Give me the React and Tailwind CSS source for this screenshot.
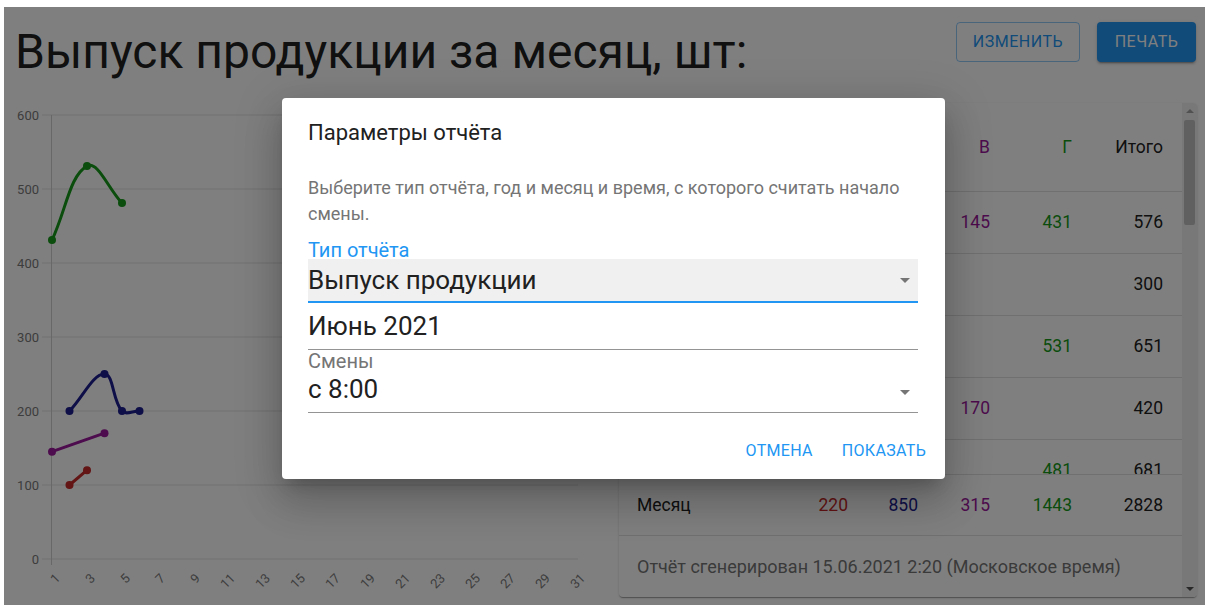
import React from 'react'

// chart geometry: day -> x, units -> y
const xOf = (d) => 52 + (d - 1) * 17.5
const yOf = (v) => 459 - v * 0.74

const days = Array.from({ length: 31 }, (_, i) => i + 1)
const ticks = [0, 100, 200, 300, 400, 500, 600]

const series = [
  { name: 'А', color: '#c62828', points: [[2, 100], [3, 120]] },
  { name: 'Б', color: '#1c1c90', points: [[2, 200], [4, 250], [5, 200], [6, 200]] },
  { name: 'В', color: '#9a189a', points: [[1, 145], [4, 170]] },
  { name: 'Г', color: '#159a18', points: [[1, 431], [3, 531], [5, 481]] },
]

const rows = [
  ['1 июня', '', '', '145', '431', '576'],
  ['2 июня', '100', '200', '', '', '300'],
  ['3 июня', '120', '', '', '531', '651'],
  ['4 июня', '', '250', '170', '', '420'],
  ['5 июня', '', '200', '', '481', '681'],
  ['6 июня', '', '200', '', '', '200'],
]

const colColors = ['text-[#c62828]', 'text-[#1c1c90]', 'text-[#9a189a]', 'text-[#159a18]', 'text-[#212121]']
const cols = 'grid grid-cols-[175px_70px_70px_72px_82px_1fr] items-center'

// chart.js-like spline path
function splinePath(pts, t = 0.4) {
  const p = pts.map(([d, v]) => [xOf(d), yOf(v)])
  if (p.length < 3) return 'M' + p.map((q) => q.join(' ')).join(' L')
  const cps = p.map((cur, i) => {
    const prev = p[i - 1] || cur
    const next = p[i + 1] || cur
    const d01 = Math.hypot(cur[0] - prev[0], cur[1] - prev[1])
    const d12 = Math.hypot(next[0] - cur[0], next[1] - cur[1])
    const s01 = d01 / (d01 + d12 || 1)
    const s12 = d12 / (d01 + d12 || 1)
    return {
      prev: [cur[0] - t * s01 * (next[0] - prev[0]), cur[1] - t * s01 * (next[1] - prev[1])],
      next: [cur[0] + t * s12 * (next[0] - prev[0]), cur[1] + t * s12 * (next[1] - prev[1])],
    }
  })
  let d = `M${p[0][0]} ${p[0][1]}`
  for (let i = 1; i < p.length; i++) {
    const a = cps[i - 1].next
    const b = cps[i].prev
    d += ` C${a[0]} ${a[1]} ${b[0]} ${b[1]} ${p[i][0]} ${p[i][1]}`
  }
  return d
}

const Chart = () => (
  <svg width="619" height="505" className="block">
    {ticks.map((v) => (
      <g key={v}>
        <line x1="42" x2="578" y1={yOf(v)} y2={yOf(v)} stroke="#e2e2e2" strokeWidth="1" />
        <text x="39" y={yOf(v) + 4.5} textAnchor="end" fontSize="13" fill="#7a7a7a">{v}</text>
      </g>
    ))}
    <line x1="51.5" x2="51.5" y1={yOf(600)} y2={yOf(0) + 6} stroke="#d0d0d0" />
    {days.filter((d) => d % 2 === 1).map((d) => (
      <text
        key={d}
        x={xOf(d) + 9}
        y="479"
        textAnchor="end"
        fontSize="13"
        fill="#7a7a7a"
        transform={`rotate(-45 ${xOf(d) + 9} 479)`}
      >
        {d}
      </text>
    ))}
    {series.map((s) => (
      <g key={s.name}>
        <path d={splinePath(s.points)} fill="none" stroke={s.color} strokeWidth="3" />
        {s.points.map(([d, v]) => (
          <circle key={d} cx={xOf(d)} cy={yOf(v)} r="4" fill={s.color} />
        ))}
      </g>
    ))}
  </svg>
)

const Row = ({ cells, className = '' }) => (
  <div className={`${cols} h-[62px] shrink-0 border-b border-[#e0e0e0] ${className}`}>
    <div className="pl-[18px] text-[#212121]">{cells[0]}</div>
    {cells.slice(1).map((c, i) => (
      <div key={i} className={`text-right ${i === 4 ? 'pr-[19px]' : 'pr-[16px]'} ${colColors[i]}`}>{c}</div>
    ))}
  </div>
)

const ReportTable = () => (
  <div className="w-[578px] h-[494px] mt-[3px] bg-white rounded-[4px] shadow-[0_2px_1px_-1px_rgba(0,0,0,0.2),0_1px_1px_0_rgba(0,0,0,0.14),0_1px_3px_0_rgba(0,0,0,0.12)] flex overflow-hidden text-[17.5px]">
    <div className="flex-1 flex flex-col">
      <div className={`${cols} h-[89px] shrink-0 border-b border-[#e0e0e0]`}>
        <div className="pl-[18px] text-[#212121]">День</div>
        {['А', 'Б', 'В', 'Г', 'Итого'].map((h, i) => (
          <div key={h} className={`text-right ${i === 4 ? 'pr-[19px]' : 'pr-[16px]'} ${colColors[i]}`}>{h}</div>
        ))}
      </div>
      <div className="h-[282px] overflow-hidden flex flex-col">
        {rows.map((r) => (
          <Row key={r[0]} cells={r} />
        ))}
      </div>
      <Row cells={['Месяц', '220', '850', '315', '1443', '2828']} className="border-t" />
      <div className="flex-1 flex items-center pl-[18px] text-[18px] text-[#757575]">
        Отчёт сгенерирован 15.06.2021 2:20 (Московское время)
      </div>
    </div>
    {/* scrollbar */}
    <div className="w-[15px] bg-[#f1f1f1] flex flex-col items-center">
      <div className="h-[15px] flex items-center justify-center">
        <div className="w-0 h-0 border-x-[4px] border-x-transparent border-b-[4px] border-b-[#a3a3a3]" />
      </div>
      <div className="w-[11px] h-[105px] mt-[2px] bg-[#c1c1c1] rounded-[2px]" />
      <div className="flex-1" />
      <div className="h-[17px] flex items-center justify-center">
        <div className="w-0 h-0 border-x-[4px] border-x-transparent border-t-[4px] border-t-[#505050]" />
      </div>
    </div>
  </div>
)

const Caret = () => (
  <div className="w-0 h-0 border-x-[5px] border-x-transparent border-t-[5px] border-t-[#757575]" />
)

const ReportDialog = () => (
  <div className="absolute left-[282px] top-[98px] w-[663px] h-[381px] bg-white rounded-[4px] shadow-[0_11px_15px_-7px_rgba(0,0,0,0.2),0_24px_38px_3px_rgba(0,0,0,0.14),0_9px_46px_8px_rgba(0,0,0,0.12)] flex flex-col">
    <div className="px-[26px] pt-[19px]">
      <h2 className="text-[22px] leading-[32px] text-[#212121]">Параметры отчёта</h2>
      <p className="mt-[26px] text-[18px] leading-[26px] text-[#757575]">
        Выберите тип отчёта, год и месяц и время, с которого считать начало смены.
      </p>
      <div className="mt-[15px] mr-[1px]">
        <div className="text-[20px] leading-[17px] text-[#2196f3]">Тип отчёта</div>
        <div className="h-[44px] bg-[#f0f0f0] border-b-2 border-[#2196f3] flex items-center justify-between pr-[8px]">
          <span className="text-[26px] text-[#212121]">Выпуск продукции</span>
          <Caret />
        </div>
        <div className="h-[47px] border-b border-[#949494] flex items-center">
          <span className="text-[26px] text-[#212121]">Июнь 2021</span>
        </div>
        <div className="mt-[2px] text-[20px] leading-[18px] text-[#757575]">Смены</div>
        <div className="h-[43px] pb-[4px] border-b border-[#949494] flex items-center justify-between pr-[8px]">
          <span className="text-[26px] text-[#212121]">с 8:00</span>
          <div className="mt-[6px]"><Caret /></div>
        </div>
      </div>
    </div>
    <div className="flex justify-end gap-[13px] pr-[11px] pt-[20px]">
      <button className="h-[36px] px-[8px] text-[16px] tracking-[0.3px] text-[#2196f3] uppercase">Отмена</button>
      <button className="h-[36px] px-[8px] text-[16px] tracking-[0.3px] text-[#2196f3] uppercase">Показать</button>
    </div>
  </div>
)

export default function App() {
  return (
    <div className="relative w-[1205px] h-[605px] overflow-hidden bg-white font-['Roboto',sans-serif]">
      <div className="flex items-start justify-between h-[100px] pl-[15px] pr-[9px] pt-[22px]">
        <h1 className="mt-[2px] text-[48px] leading-[56px] text-[#212121]">Выпуск продукции за месяц, шт:</h1>
        <div className="flex gap-[17px]">
          <button className="w-[124px] h-[40px] rounded-[4px] border border-[#2196f3]/50 text-[16px] tracking-[0.5px] text-[#2196f3]">ИЗМЕНИТЬ</button>
          <button className="w-[99px] h-[40px] rounded-[4px] bg-[#2196f3] text-white text-[16px] tracking-[0.5px] shadow-[0_3px_1px_-2px_rgba(0,0,0,0.2),0_2px_2px_0_rgba(0,0,0,0.14),0_1px_5px_0_rgba(0,0,0,0.12)]">ПЕЧАТЬ</button>
        </div>
      </div>
      <div className="flex">
        <Chart />
        <ReportTable />
      </div>
      {/* modal backdrop */}
      <div className="absolute left-[4px] top-[7px] right-0 bottom-0 bg-black/50" />
      <ReportDialog />
    </div>
  )
}
